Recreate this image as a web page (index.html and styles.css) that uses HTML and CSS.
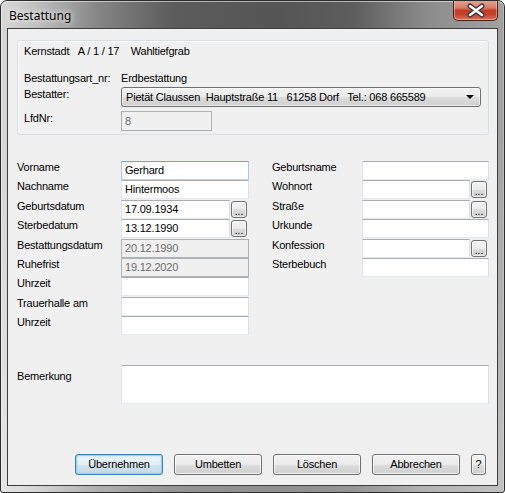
FILE: index.html
```html
<!DOCTYPE html>
<html lang="de">
<head>
<meta charset="utf-8">
<title>Bestattung</title>
<link rel="stylesheet" href="styles.css">
</head>
<body>
<div class="window">
  <div class="titlebar">
    <span class="title">Bestattung</span>
    <div class="close">
      <svg width="44" height="19" viewBox="0 0 44 19">
        <path d="M16 5 L28 14 M28 5 L16 14" stroke="#2e3340" stroke-width="5" stroke-linecap="round"/>
        <path d="M16 5 L28 14 M28 5 L16 14" stroke="#ffffff" stroke-width="2.6" stroke-linecap="round"/>
      </svg>
    </div>
  </div>
  <div class="client">
    <div class="group">
      <div class="g-head">Kernstadt&nbsp;&nbsp;&nbsp;A / 1 / 17&nbsp;&nbsp;&nbsp;&nbsp;Wahltiefgrab</div>
      <div class="g-row g-art"><span class="g-label">Bestattungsart_nr:</span><span>Erdbestattung</span></div>
      <div class="g-row g-bestatter">
        <span class="g-label pad">Bestatter:</span>
        <div class="combo"><span>Pietät Claussen&nbsp; Hauptstraße 11&nbsp;&nbsp; 61258 Dorf&nbsp;&nbsp; Tel.: 068 665589</span><span class="arrow"></span></div>
      </div>
      <div class="g-row g-lfd">
        <span class="g-label pad">LfdNr:</span>
        <div class="field disabled lfd">8</div>
      </div>
    </div>

    <div class="form">
      <div class="fgrid left">
        <span class="lbl">Vorname</span><div class="field focus">Gerhard</div>
        <span class="lbl">Nachname</span><div class="field">Hintermoos</div>
        <span class="lbl">Geburtsdatum</span><div class="picker"><div class="field">17.09.1934</div><span class="dots">...</span></div>
        <span class="lbl">Sterbedatum</span><div class="picker"><div class="field">13.12.1990</div><span class="dots">...</span></div>
        <span class="lbl">Bestattungsdatum</span><div class="field disabled">20.12.1990</div>
        <span class="lbl">Ruhefrist</span><div class="field disabled">19.12.2020</div>
        <span class="lbl">Uhrzeit</span><div class="field"></div>
        <span class="lbl">Trauerhalle am</span><div class="field"></div>
        <span class="lbl">Uhrzeit</span><div class="field"></div>
      </div>
      <div class="fgrid right">
        <span class="lbl">Geburtsname</span><div class="field"></div>
        <span class="lbl">Wohnort</span><div class="picker"><div class="field"></div><span class="dots">...</span></div>
        <span class="lbl">Straße</span><div class="picker"><div class="field"></div><span class="dots">...</span></div>
        <span class="lbl">Urkunde</span><div class="field"></div>
        <span class="lbl">Konfession</span><div class="picker"><div class="field"></div><span class="dots">...</span></div>
        <span class="lbl">Sterbebuch</span><div class="field"></div>
      </div>
    </div>

    <div class="remark">
      <span class="lbl remark-lbl">Bemerkung</span>
      <div class="field memo"></div>
    </div>

    <div class="buttons">
      <button class="btn default">Übernehmen</button>
      <button class="btn">Umbetten</button>
      <button class="btn">Löschen</button>
      <button class="btn">Abbrechen</button>
      <button class="btn help">?</button>
    </div>
  </div>
</div>
</body>
</html>
```

FILE: styles.css
```css
* { box-sizing: border-box; }
html, body { margin: 0; padding: 0; }
body {
  width: 505px;
  height: 493px;
  overflow: hidden;
  background: #ffffff;
  font-family: "Liberation Sans", Arial, sans-serif;
  font-size: 11px;
  letter-spacing: -0.2px;
  color: #000;
}

.window {
  width: 505px;
  height: 493px;
  border: 1px solid #2c2c2c;
  border-radius: 7px 7px 3px 3px;
  background:
    linear-gradient(to bottom, rgba(255,255,255,0) 0, rgba(255,255,255,0) 25%, rgba(255,255,255,0.35) 100%),
    linear-gradient(to right, #d8d8d8 0, #c0c0c0 7%, #868686 19%, #5c5c5c 34%, #555 55%, #5d5d5d 70%, #8a8a8a 84%, #a2a2a2 100%);
  box-shadow: inset 0 1px 0 rgba(255,255,255,0.55), inset 1px 0 0 rgba(255,255,255,0.35), inset -1px 0 0 rgba(255,255,255,0.25);
  display: flex;
  flex-direction: column;
  overflow: hidden;
}

.titlebar {
  height: 27px;
  flex: none;
  display: flex;
  align-items: flex-start;
  padding: 0 6px 0 8px;
}
.title {
  font-family: "Noto Sans", "DejaVu Sans", sans-serif;
  font-size: 12px;
  letter-spacing: 0;
  line-height: 16px;
  margin-top: 7px;
  color: #000;
  text-shadow: 0 0 5px rgba(255,255,255,0.95), 0 0 9px rgba(255,255,255,0.7);
}
.close {
  margin-left: auto;
  margin-top: -1px;
  width: 45px;
  height: 21px;
  border: 1px solid #4a2018;
  border-top: none;
  border-radius: 0 0 5px 5px;
  background: linear-gradient(to bottom, #e7a797 0, #d87a66 40%, #c33b22 52%, #c2412a 72%, #dc7459 100%);
  box-shadow: inset 0 0 0 1px rgba(255,220,210,0.45);
}
.close svg { display: block; margin-top: 1px; }

.client {
  flex: 1;
  margin: 0 6px 6px;
  border: 1px solid #3e3e3e;
  background: #f0f0f0;
  display: flex;
  flex-direction: column;
  padding: 11px 8px 10px 9px;
}

/* group box */
.group {
  height: 95px;
  flex: none;
  border: 1px solid #d5dfe5;
  border-radius: 3px;
  box-shadow: inset 1px 1px 0 #ffffff;
  padding: 4px 6px 0 6px;
  display: flex;
  flex-direction: column;
}
.g-head { line-height: 13px; height: 13px; }
.g-row { display: flex; align-items: flex-start; }
.g-label { width: 97px; flex: none; line-height: 13px; }
.g-label.pad { padding-top: 1px; }
.g-art { margin-top: 14px; line-height: 13px; }
.g-bestatter { margin-top: 2px; }
.g-lfd { margin-top: 4px; }

.combo {
  width: 360px;
  height: 20px;
  border: 1px solid #707070;
  border-radius: 3px;
  background: linear-gradient(to bottom, #f2f2f2 0, #ebebeb 50%, #dddddd 50%, #cfcfcf 100%);
  box-shadow: inset 0 0 0 1px rgba(255,255,255,0.6);
  padding-left: 4px;
  line-height: 18px;
  display: flex;
  align-items: center;
}
.arrow {
  margin-left: auto;
  margin-right: 6px;
  width: 0;
  height: 0;
  border-left: 4px solid transparent;
  border-right: 4px solid transparent;
  border-top: 4px solid #000;
}

/* fields */
.field {
  height: 19px;
  border: 1px solid;
  border-color: #abadb3 #dbdfe6 #e3e9ef #e2e3ea;
  background: #ffffff;
  padding-left: 3px;
  line-height: 17px;
  white-space: nowrap;
  overflow: hidden;
}
.field.focus { border-color: #6aa5dc #a9cbea #b7d5ef #a9cbea; }
.field.disabled {
  background: #f0f0f0;
  border-color: #adb2b5;
  color: #6d6d6d;
}
.field.lfd { width: 91px; height: 20px; line-height: 18px; }

.form {
  display: flex;
  gap: 23px;
  margin-top: 26px;
  flex: none;
}
.fgrid {
  display: grid;
  grid-template-rows: 19px 20px 19px 20px 19px 19px 20px 19px 20px;
  align-items: start;
}
.fgrid.left { grid-template-columns: 104px 128px; }
.fgrid.right { grid-template-columns: 90px 127px; }
.lbl { line-height: 12px; }

.picker { display: flex; align-items: flex-start; }
.picker .field { flex: 1; min-width: 0; }
.dots {
  flex: none;
  width: 16px;
  height: 17px;
  margin: 1px 2px 0 1px;
  border: 1px solid #707070;
  border-radius: 3px;
  background: linear-gradient(to bottom, #f2f2f2 0, #ebebeb 50%, #dddddd 50%, #cfcfcf 100%);
  box-shadow: inset 0 0 0 1px rgba(255,255,255,0.6);
  font-size: 10px;
  letter-spacing: 0;
  line-height: 10px;
  text-align: center;
  padding-top: 5px;
}

.remark {
  display: flex;
  align-items: flex-start;
  margin-top: 29px;
  flex: none;
}
.remark-lbl { width: 104px; flex: none; padding-top: 5px; }
.field.memo { width: 368px; height: 39px; }

.buttons {
  margin-top: auto;
  display: flex;
  gap: 11px;
  padding-left: 58px;
}
.btn {
  width: 88px;
  height: 21px;
  margin: 0;
  padding: 0;
  border: 1px solid #707070;
  border-radius: 3px;
  background: linear-gradient(to bottom, #f2f2f2 0, #ebebeb 50%, #dddddd 50%, #cfcfcf 100%);
  box-shadow: inset 0 0 0 1px rgba(255,255,255,0.7);
  font-family: "Liberation Sans", Arial, sans-serif;
  font-size: 11px;
  letter-spacing: -0.2px;
  color: #000;
  line-height: 19px;
  text-align: center;
}
.btn.default {
  border-color: #3c7fb1;
  background: linear-gradient(to bottom, #eef6fb 0, #e3eef5 50%, #d3e3ee 50%, #c7dae8 100%);
  box-shadow: inset 0 0 0 1px #8fd6f7, inset 0 0 2px 1px rgba(120,200,240,0.6);
}
.btn.help { width: 15px; }
```
